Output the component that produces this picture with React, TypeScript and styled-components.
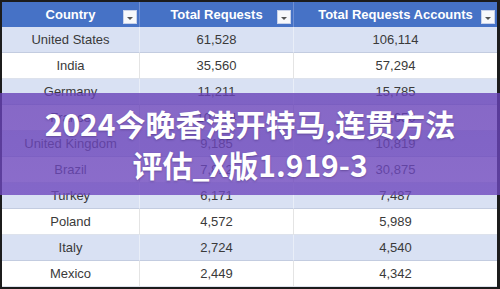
import styled, { createGlobalStyle } from 'styled-components';

const GlobalStyle = createGlobalStyle`
  html, body {
    margin: 0;
    padding: 0;
    background: #1c1c1c;
  }
`;

const Frame = styled.div`
  position: relative;
  width: 500px;
  height: 289px;
  box-sizing: border-box;
  padding: 2px 3px 2px 2px;
  background: #1c1c1c;
  overflow: hidden;
`;

const Table = styled.div`
  display: grid;
  grid-template-columns: 137px 154px 204px;
  grid-auto-rows: 26px;
  grid-template-rows: 25px;
  height: 100%;
  background: #ffffff;
  font-family: 'Liberation Sans', Arial, sans-serif;
`;

const HeadCell = styled.div`
  position: relative;
  display: flex;
  align-items: center;
  justify-content: center;
  background: #4672c6;
  color: #ffffff;
  font-size: 13px;
  font-weight: 700;
  border-left: ${p => (p.$first ? 'none' : '1px solid #6f8fd3')};
`;

const FilterButton = styled.span`
  position: absolute;
  right: 2px;
  top: 8px;
  width: 14px;
  height: 14px;
  background: #f7f8fb;
  border: 1px solid #c8d2ea;
  box-sizing: border-box;
  display: flex;
  align-items: center;
  justify-content: center;

  &::after {
    content: '';
    border-left: 3px solid transparent;
    border-right: 3px solid transparent;
    border-top: 3px solid #555;
    margin-top: 2px;
  }
`;

const Cell = styled.div<{ $striped: boolean; $first?: boolean }>`
  display: flex;
  align-items: center;
  justify-content: center;
  background: ${p => (p.$striped ? '#d9e1f3' : '#ffffff')};
  color: #3a3a3a;
  font-size: 13px;
  border-bottom: 1px solid ${p => (p.$striped ? '#c3cce0' : '#dde2ec')};
  border-left: ${p =>
    p.$first ? 'none' : `1px solid ${p.$striped ? '#e9eef8' : '#e4e4e4'}`};
`;

const Overlay = styled.div`
  position: absolute;
  left: 0;
  right: 0;
  top: 93px;
  height: 102px;
  display: flex;
  flex-direction: column;
  align-items: center;
  justify-content: center;
  background: linear-gradient(
    180deg,
    rgba(104, 66, 184, 0.8) 0%,
    rgba(110, 72, 190, 0.8) 100%
  );
`;

const Title = styled.div`
  color: #ffffff;
  font-family: 'Noto Sans CJK SC', 'Noto Sans', sans-serif;
  font-size: 30px;
  font-weight: 700;
  line-height: 41px;
  text-align: center;
  white-space: nowrap;
  text-shadow: 0 1px 2px rgba(40, 20, 80, 0.35);
`;

const rows = [
  ['United States', '61,528', '106,114'],
  ['India', '35,560', '57,294'],
  ['Germany', '11,211', '15,785'],
  ['France', '10,324', '12,650'],
  ['United Kingdom', '9,185', '10,819'],
  ['Brazil', '7,812', '30,875'],
  ['Turkey', '6,171', '7,487'],
  ['Poland', '4,572', '5,989'],
  ['Italy', '2,724', '4,540'],
  ['Mexico', '2,449', '4,342'],
];

const headers = ['Country', 'Total Requests', 'Total Requests Accounts'];

export default function App() {
  return (
    <>
      <GlobalStyle />
      <Frame>
        <Table>
          {headers.map((h, i) => (
            <HeadCell key={h} $first={i === 0}>
              {h}
              <FilterButton />
            </HeadCell>
          ))}
          {rows.map((row, r) =>
            row.map((v, c) => (
              <Cell key={`${r}-${c}`} $striped={r % 2 === 0} $first={c === 0}>
                {v}
              </Cell>
            ))
          )}
        </Table>
        <Overlay>
          <Title>2024今晚香港开特马,连贯方法</Title>
          <Title>评估_X版1.919-3</Title>
        </Overlay>
      </Frame>
    </>
  );
}
